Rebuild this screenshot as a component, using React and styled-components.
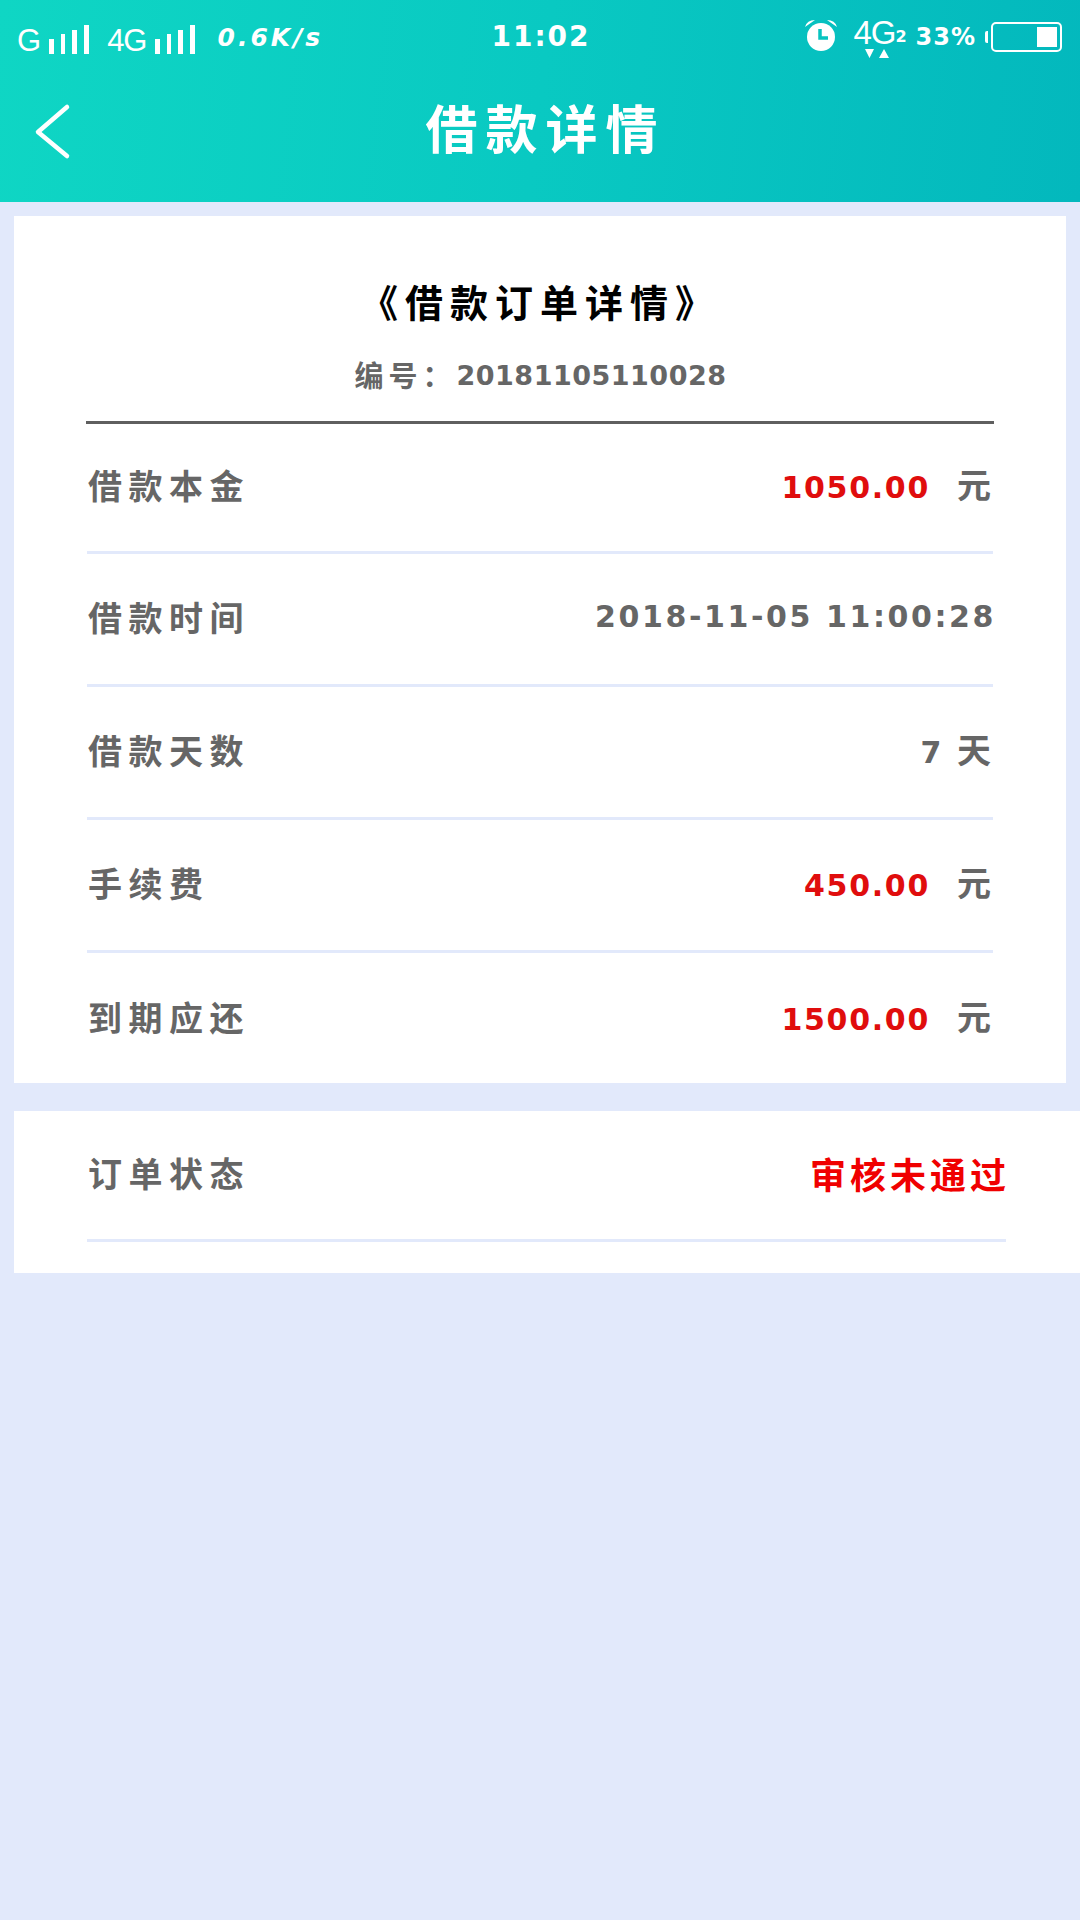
import React from "react";
import styled, { createGlobalStyle } from "styled-components";

const Global = createGlobalStyle`
  html, body { margin: 0; padding: 0; background: #e2e9fb; }
  * { box-sizing: border-box; }
  body { font-family: "Noto Sans CJK SC", "Noto Sans", sans-serif; }
`;
const Page = styled.div`
  width: 1080px; height: 1920px; background: #e2e9fb;
  display: flex; flex-direction: column;
`;
const Header = styled.header`
  height: 202px;
  background: linear-gradient(97deg, #0fd6c4 0%, #09c9c2 50%, #03b8bd 100%);
  color: #fff;
  display: flex; flex-direction: column;
`;
const StatusBar = styled.div`
  height: 72px; padding: 0 18px 0 17px;
  display: grid; grid-template-columns: 1fr auto 1fr; align-items: center;
`;
const StatusGroup = styled.div`
  display: flex; align-items: center;
  justify-content: ${p => (p.$end ? "flex-end" : "flex-start")};
`;
const NetLabel = styled.span`
  font: 400 ${p => p.$size || 31}px/1 "Liberation Sans", sans-serif;
  letter-spacing: -1px;
  margin: ${p => p.$margin || "8px 0 0 0"};
`;
const Speed = styled.span`
  font: italic 700 25px/1 "DejaVu Sans", sans-serif;
  letter-spacing: 3px;
  margin: 2px 0 0 20px;
  width: 112px; white-space: nowrap;
`;
const Clock = styled.span`
  font: 700 28px/1 "DejaVu Sans", sans-serif;
  letter-spacing: 2px;
  margin: 2px 0 0 3px;
`;
const Percent = styled.span`
  font: 700 24px/1 "DejaVu Sans", sans-serif;
  letter-spacing: 1px;
  margin: 2px 9px 0 9px;
`;
const NetStack = styled.div`
  display: flex; flex-direction: column; align-items: center;
  margin: 0 0 0 15px;
`;
const NetRow = styled.div`display: flex; align-items: flex-end; margin-top: 2px;`;
const SubTwo = styled.span`font: 700 16px/1 "DejaVu Sans", sans-serif; margin-bottom: 4px;`;
const Battery = styled.div`
  width: 71px; height: 30px; border: 2px solid #fff; border-radius: 5px;
  padding: 3px; display: flex; justify-content: flex-end; margin-top: 2px;
`;
const BatteryFill = styled.div`width: 20px; background: #fff;`;
const Nub = styled.div`
  width: 3px; height: 12px; background: #fff; border-radius: 2px 0 0 2px;
  margin: 2px 3px 0 0;
`;
const NavBar = styled.div`
  flex: 1; position: relative; display: flex; align-items: center; justify-content: center;
  padding-bottom: 21px;
`;
const BackIcon = styled.svg`
  position: absolute; left: 32px; top: 31px;
`;
const NavTitle = styled.h1`
  margin: 0; font: 700 52px/1 "Noto Sans CJK SC", sans-serif;
  letter-spacing: 8px; margin-right: -8px; padding-left: 3px;
`;
const Card = styled.section`
  background: #fff;
  margin: ${p => p.$margin};
  padding: ${p => p.$padding};
  height: ${p => p.$height}px;
`;
const OrderTitle = styled.h2`
  margin: 0; text-align: center; color: #000;
  font: 700 38px/52px "Noto Sans CJK SC", sans-serif;
  letter-spacing: 7px;
`;
const OrderNo = styled.div`
  margin-top: 29px; display: flex; justify-content: center; align-items: center; color: #666;
  font: 700 27px/40px "DejaVu Sans", sans-serif;
  letter-spacing: 0.5px;
  padding-left: 1px;
`;
const OrderPrefix = styled.span`
  font: 700 29px/40px "Noto Sans CJK SC", sans-serif;
  letter-spacing: 5px;
  margin-top: -4px;
`;
const Rule = styled.div`
  height: 3px; background: #5f5f5f; margin-top: 25px;
`;
const Row = styled.div`
  display: flex; align-items: center; justify-content: space-between;
  height: ${p => p.$height || 133}px;
  border-bottom: ${p => (p.$last ? "none" : "3px solid #e2e9fb")};
  margin-left: 1px;
  margin-right: ${p => (p.$flush ? 0 : 1)}px;
  padding-bottom: 5px;
`;
const Label = styled.span`
  color: #666;
  font: 700 34px/1 "Noto Sans CJK SC", sans-serif;
  letter-spacing: 6.5px;
  padding-left: 1px;
`;
const Value = styled.span`
  display: flex; align-items: baseline; color: #666;
  font: 700 30px/1 "DejaVu Sans", sans-serif;
  letter-spacing: ${p => (p.$wide ? 2.6 : 1.7)}px;
  margin-right: ${p => (p.$wide ? -3 : 0)}px;
`;
const Amount = styled.span`color: #e00d0d;`;
const Unit = styled.span`
  font: 700 34px/1 "Noto Sans CJK SC", sans-serif;
  margin: 0 2px 0 ${p => p.$gap}px;
  letter-spacing: 0;
`;
const Status = styled.span`
  color: #f00000;
  font: 700 36px/1 "Noto Sans CJK SC", sans-serif;
  letter-spacing: 4px; margin-right: -4px;
`;

const Signal = () => (
  <svg width="42" height="29" viewBox="0 0 42 29" fill="#fff" style={{ marginLeft: 9, marginTop: 7 }}>
    <rect x="0" y="14" width="5" height="15" />
    <rect x="12" y="9" width="4" height="20" />
    <rect x="23" y="5" width="5" height="24" />
    <rect x="35" y="0" width="5" height="29" />
  </svg>
);
const Alarm = () => (
  <svg width="34" height="34" viewBox="0 0 34 34" style={{ marginTop: -2 }}>
    <circle cx="17" cy="19" r="14" fill="#fff" />
    <path d="M1 9 Q3 2 11 2 Z M33 9 Q31 2 23 2 Z" fill="#fff" />
    <path d="M16 11 V20 H24" fill="none" stroke="#07c4c0" strokeWidth="3.5" />
  </svg>
);
const Arrows = () => (
  <svg width="24" height="10" viewBox="0 0 24 10" fill="#fff" style={{ marginLeft: -6, display: "block" }}>
    <path d="M0 0 H9 L4.5 9 Z M14 9 L19 0 L24 9 Z" />
  </svg>
);

const rows = [
  { label: "借款本金", amount: "1050.00", unit: "元", gap: 27, height: 130 },
  { label: "借款时间", text: "2018-11-05 11:00:28", wide: true },
  { label: "借款天数", text: "7", unit: "天", gap: 14 },
  { label: "手续费", amount: "450.00", unit: "元", gap: 27 },
  { label: "到期应还", amount: "1500.00", unit: "元", gap: 27, last: true },
];

export default function App() {
  return (
    <Page>
      <Global />
      <Header>
        <StatusBar>
          <StatusGroup>
            <NetLabel>G</NetLabel>
            <Signal />
            <NetLabel $margin="8px 0 0 16px">4G</NetLabel>
            <Signal />
            <Speed>0.6K/s</Speed>
          </StatusGroup>
          <Clock>11:02</Clock>
          <StatusGroup $end>
            <Alarm />
            <NetStack>
              <NetRow>
                <NetLabel $size={33} $margin="0">4G</NetLabel>
                <SubTwo>2</SubTwo>
              </NetRow>
              <Arrows />
            </NetStack>
            <Percent>33%</Percent>
            <Nub />
            <Battery><BatteryFill /></Battery>
          </StatusGroup>
        </StatusBar>
        <NavBar>
          <BackIcon width="40" height="62" viewBox="0 0 40 62" fill="none">
            <path d="M35 4 L6 29 L35 53" stroke="#fff" strokeWidth="4.5" strokeLinecap="round" strokeLinejoin="round" />
          </BackIcon>
          <NavTitle>借款详情</NavTitle>
        </NavBar>
      </Header>

      <Card $margin="14px 14px 0 14px" $padding="59px 72px 0 72px" $height={867}>
        <OrderTitle>《借款订单详情》</OrderTitle>
        <OrderNo><OrderPrefix>编号：</OrderPrefix>20181105110028</OrderNo>
        <Rule />
        {rows.map(r => (
          <Row key={r.label} $last={r.last} $height={r.height}>
            <Label>{r.label}</Label>
            <Value $wide={r.wide}>
              {r.amount ? <Amount>{r.amount}</Amount> : r.text}
              {r.unit && <Unit $gap={r.gap}>{r.unit}</Unit>}
            </Value>
          </Row>
        ))}
      </Card>

      <Card $margin="28px 0 0 14px" $padding="0 74px 0 72px" $height={162}>
        <Row $height={131} $flush>
          <Label>订单状态</Label>
          <Status>审核未通过</Status>
        </Row>
      </Card>
    </Page>
  );
}
